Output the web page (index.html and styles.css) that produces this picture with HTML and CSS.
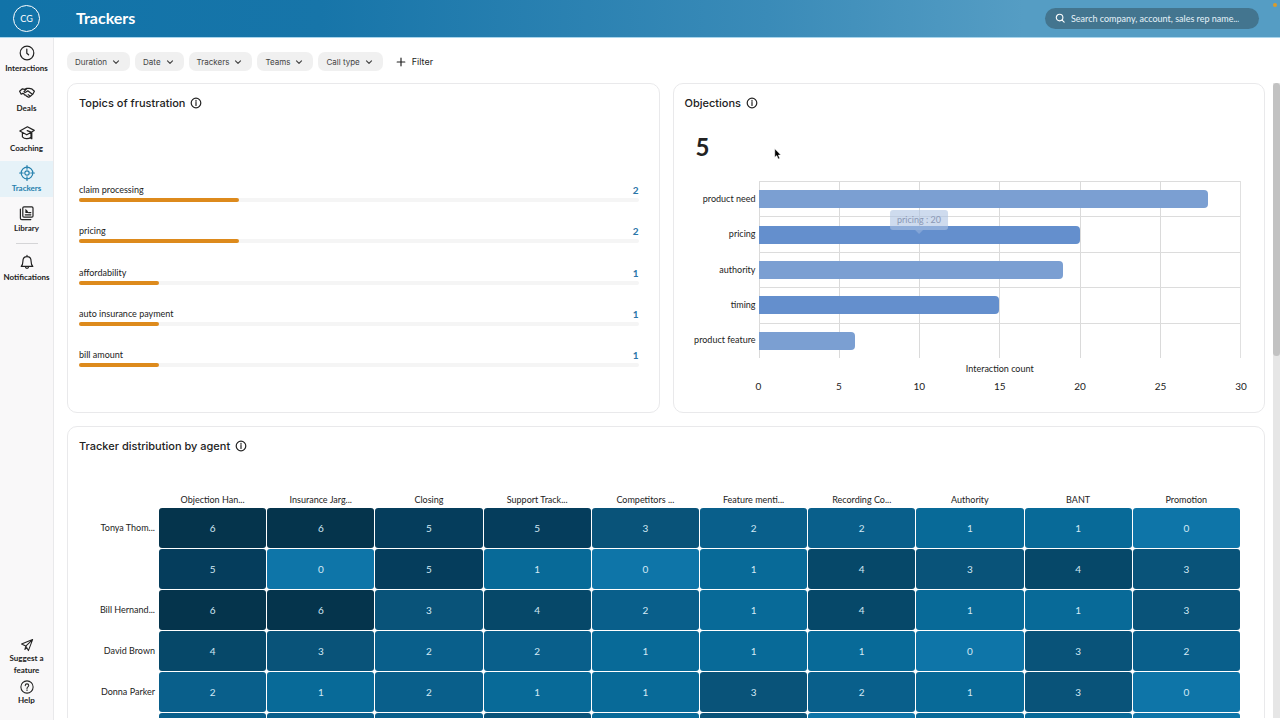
FILE: index.html
```html
<!DOCTYPE html>
<html lang="en">
  <head>
    <meta charset="UTF-8" />
    <meta name="viewport" content="width=device-width, initial-scale=1.0" />
    <title>Trackers</title>
    <link rel="stylesheet" href="styles.css">
  </head>
  <body>
    <header class="topbar">
      <button class="avatar" type="button">CG</button>
      <h1>Trackers</h1>
      <label class="search">
        <svg viewBox="0 0 12 12" width="11" height="11" class="icon"><circle cx="5" cy="5" r="3.6" /><path d="M7.7 7.7 10 10" /></svg>
        <input type="search" placeholder="Search company, account, sales rep name..." aria-label="Search" />
      </label>
      <span class="status-dot"></span>
    </header>

    <div class="layout">
      <nav class="sidebar">
        <a class="nav-item" href="#">
          <svg viewBox="0 0 16 16" width="16" height="16" class="icon"><circle cx="8" cy="8" r="6.8" /><path d="M7.8 4v4.2l1.8 1.6" /></svg>
          <span>Interactions</span>
        </a>
        <a class="nav-item" href="#">
          <svg viewBox="0 0 16 16" width="16" height="16" class="icon"><path d="M3.4 3.8.6 6.2l1.6 3M12.6 3.8l2.8 2.4-1.6 3M3.4 3.8l2.2.6 2.2-1 2.4 0 2.4.4M7.8 3.6 5 6.6c.6 1 2 .9 2.8-.2l1-.6 4.8 3.6M2.2 9.2l1.2-.8 1.4.2.6 1.2 1.4.3.5 1 1.2.2.6.8 1.2 0M13.6 9.4l-1.2 1-1 .9-1.2.8M9.2 9.6l2 1.6" /></svg>
          <span>Deals</span>
        </a>
        <a class="nav-item" href="#">
          <svg viewBox="0 0 16 16" width="16" height="16" class="icon"><path d="M.8 6 8.4 1.8 15.2 5.4 7.8 9.8ZM3.4 7.6v4.2c2 2.2 5.8 2.6 8.6.4V7.4M8.2 5.6l4.6 1.8v6.4l-1.4-1.2" /></svg>
          <span>Coaching</span>
        </a>
        <a class="nav-item active" href="#">
          <svg viewBox="0 0 16 16" width="16" height="16" class="icon"><circle cx="8" cy="8" r="5.8" /><circle cx="8" cy="8" r="2.2" /><path d="M8 .6v3.6M8 11.8v3.6M.6 8h3.6M11.8 8h3.6" /></svg>
          <span>Trackers</span>
        </a>
        <a class="nav-item" href="#">
          <svg viewBox="0 0 16 16" width="16" height="16" class="icon"><rect x="3.8" y="1.8" width="10.2" height="10.4" rx="1.2" /><path d="M1.4 4.2v9c0 .9.5 1.4 1.4 1.4h9M6.2 9.8h5.6M9.6 7.6h2.2" /><path class="solid" d="M6.4 3.8v4.2h3.4L8.2 5.6Z" /></svg>
          <span>Library</span>
        </a>
        <hr />
        <a class="nav-item" href="#">
          <svg viewBox="0 0 16 16" width="16" height="16" class="icon"><path d="M8 1.4v1M2.2 12.4h11.6c-1.4-1.4-1.7-2.4-1.7-5.2C12.1 4.4 10.4 2.6 8 2.6S3.9 4.4 3.9 7.2c0 2.8-.3 3.8-1.7 5.2ZM6.4 12.6c0 2.4 3.2 2.4 3.2 0" /></svg>
          <span>Notifications</span>
        </a>

        <div class="nav-footer">
          <a class="nav-item" href="#">
            <svg viewBox="0 0 16 16" width="14" height="14" class="icon"><path d="M14.4 1.8 1.8 6.8 6.6 9.2 9.6 14.4ZM14.4 1.8 6.6 9.2 5.6 13 7.8 11.4" /></svg>
            <span>Suggest a feature</span>
          </a>
          <a class="nav-item" href="#">
            <svg viewBox="0 0 16 16" width="14" height="14" class="icon"><circle cx="8" cy="8" r="7" /><path d="M6 6.4c0-2.6 4-2.6 4 0 0 1.5-2 1.5-2 3.2M8 11.2v.8" /></svg>
            <span>Help</span>
          </a>
        </div>
      </nav>

      <main class="content">
        <div class="filters">
          <button class="pill" type="button">Duration <svg viewBox="0 0 8 8" width="8" height="8" class="icon"><path d="M1.5 2.8 4 5.3l2.5-2.5" /></svg></button>
          <button class="pill" type="button">Date <svg viewBox="0 0 8 8" width="8" height="8" class="icon"><path d="M1.5 2.8 4 5.3l2.5-2.5" /></svg></button>
          <button class="pill" type="button">Trackers <svg viewBox="0 0 8 8" width="8" height="8" class="icon"><path d="M1.5 2.8 4 5.3l2.5-2.5" /></svg></button>
          <button class="pill" type="button">Teams <svg viewBox="0 0 8 8" width="8" height="8" class="icon"><path d="M1.5 2.8 4 5.3l2.5-2.5" /></svg></button>
          <button class="pill" type="button">Call type <svg viewBox="0 0 8 8" width="8" height="8" class="icon"><path d="M1.5 2.8 4 5.3l2.5-2.5" /></svg></button>
          <button class="add-filter" type="button"><svg viewBox="0 0 10 10" width="10" height="10" class="icon"><path d="M5 1.2v7.6M1.2 5h7.6" /></svg> Filter</button>
        </div>

        <div class="scroll-row">
          <div class="cards">
            <section class="card">
              <h2>Topics of frustration <svg viewBox="0 0 12 12" width="12" height="12" class="icon"><circle cx="6" cy="6" r="4.8" /><path d="M6 5.4v3M6 3.4v.8" /></svg></h2>
              <ul class="topics">
                <li><span>claim processing</span><b>2</b><div class="track"><div class="fill" style="width: 28.57%"></div></div></li>
                <li><span>pricing</span><b>2</b><div class="track"><div class="fill" style="width: 28.57%"></div></div></li>
                <li><span>affordability</span><b>1</b><div class="track"><div class="fill" style="width: 14.28%"></div></div></li>
                <li><span>auto insurance payment</span><b>1</b><div class="track"><div class="fill" style="width: 14.28%"></div></div></li>
                <li><span>bill amount</span><b>1</b><div class="track"><div class="fill" style="width: 14.28%"></div></div></li>
              </ul>
            </section>

            <section class="card objections">
              <h2>Objections <svg viewBox="0 0 12 12" width="12" height="12" class="icon"><circle cx="6" cy="6" r="4.8" /><path d="M6 5.4v3M6 3.4v.8" /></svg></h2>
              <div class="total">5</div>
              <div class="chart">
                <div class="y-labels">
                  <span>product need</span>
                  <span>pricing</span>
                  <span>authority</span>
                  <span>timing</span>
                  <span>product feature</span>
                </div>
                <div class="plot">
                  <div class="row"><div class="bar" style="width: 93.33%"></div></div>
                  <div class="row"><div class="bar dark" style="width: 66.67%"></div></div>
                  <div class="row"><div class="bar" style="width: 63.33%"></div></div>
                  <div class="row"><div class="bar dark" style="width: 50%"></div></div>
                  <div class="row"><div class="bar" style="width: 20%"></div></div>
                  <div class="tooltip">pricing : 20</div>
                </div>
                <div class="axis">
                  <div class="axis-title">Interaction count</div>
                  <div class="ticks"><span>0</span><span>5</span><span>10</span><span>15</span><span>20</span><span>25</span><span>30</span></div>
                </div>
              </div>
              <svg viewBox="0 0 8 12" width="8" height="12" class="cursor"><path d="M.8.8v8.4l2-1.6 1.4 3.4 1.5-.7-1.4-3.2h2.5Z" /></svg>
            </section>

            <section class="card wide">
              <h2>Tracker distribution by agent <svg viewBox="0 0 12 12" width="12" height="12" class="icon"><circle cx="6" cy="6" r="4.8" /><path d="M6 5.4v3M6 3.4v.8" /></svg></h2>
              <table class="heatmap">
                <thead>
                  <tr><td></td><th>Objection Han...</th><th>Insurance Jarg...</th><th>Closing</th><th>Support Track...</th><th>Competitors ...</th><th>Feature menti...</th><th>Recording Co...</th><th>Authority</th><th>BANT</th><th>Promotion</th></tr>
                </thead>
                <tbody>
                  <tr><th>Tonya Thom...</th><td class="v6">6</td><td class="v6">6</td><td class="v5">5</td><td class="v5">5</td><td class="v3">3</td><td class="v2">2</td><td class="v2">2</td><td class="v1">1</td><td class="v1">1</td><td class="v0">0</td></tr>
                  <tr><th></th><td class="v5">5</td><td class="v0">0</td><td class="v5">5</td><td class="v1">1</td><td class="v0">0</td><td class="v1">1</td><td class="v4">4</td><td class="v3">3</td><td class="v4">4</td><td class="v3">3</td></tr>
                  <tr><th>Bill Hernand...</th><td class="v6">6</td><td class="v6">6</td><td class="v3">3</td><td class="v4">4</td><td class="v2">2</td><td class="v1">1</td><td class="v4">4</td><td class="v1">1</td><td class="v1">1</td><td class="v3">3</td></tr>
                  <tr><th>David Brown</th><td class="v4">4</td><td class="v3">3</td><td class="v2">2</td><td class="v2">2</td><td class="v1">1</td><td class="v1">1</td><td class="v1">1</td><td class="v0">0</td><td class="v3">3</td><td class="v2">2</td></tr>
                  <tr><th>Donna Parker</th><td class="v2">2</td><td class="v1">1</td><td class="v2">2</td><td class="v1">1</td><td class="v1">1</td><td class="v3">3</td><td class="v2">2</td><td class="v1">1</td><td class="v3">3</td><td class="v0">0</td></tr>
                  <tr><th></th><td class="v2"></td><td class="v2"></td><td class="v2"></td><td class="v3"></td><td class="v1"></td><td class="v3"></td><td class="v0"></td><td class="v1"></td><td class="v1"></td><td class="v0"></td></tr>
                </tbody>
              </table>
            </section>
          </div>
          <div class="scrollbar"><div class="thumb"></div></div>
        </div>
      </main>
    </div>
  </body>
</html>
```
FILE: styles.css
```css
:root {
  --text: #222;
  --border: #e9e9eb;
  --orange: #dd8a1c;
}

* {
  box-sizing: border-box;
  margin: 0;
  padding: 0;
}

body {
  display: flex;
  flex-direction: column;
  height: 100vh;
  overflow: hidden;
  font-family: Lato, sans-serif;
  font-size: 9px;
  line-height: 16px;
  color: var(--text);
  background: #fff;
}

button,
input {
  font: inherit;
  color: inherit;
  border: 0;
  background: none;
}

a {
  color: inherit;
  text-decoration: none;
}

.icon {
  flex: none;
  fill: none;
  stroke: currentColor;
  stroke-width: 1.2;
  stroke-linecap: round;
  stroke-linejoin: round;
}

.icon .solid {
  fill: currentColor;
  stroke: none;
}

/* top bar */
.topbar {
  position: relative;
  display: flex;
  align-items: center;
  flex: none;
  height: 38px;
  padding: 0 21px 0 13px;
  border-bottom: 1px solid #a9d5ec;
  color: #fff;
  background: linear-gradient(90deg, #1173a8 0%, #1775a9 25%, #3a8bb8 60%, #559dc4 80%, #559dc4 100%);
}

.avatar {
  width: 27px;
  height: 27px;
  border: 1px solid #fff;
  border-radius: 50%;
}

.topbar h1 {
  margin-left: 36px;
  padding-bottom: 2px;
  font-size: 16px;
  line-height: 20px;
}

.search {
  display: flex;
  align-items: center;
  gap: 5px;
  width: 214px;
  height: 21px;
  margin-left: auto;
  padding: 0 10px;
  border-radius: 11px;
  background: #43758f;
}

.search input {
  flex: 1;
  min-width: 0;
  outline: none;
}

.search input::placeholder {
  color: #e6f3fa;
}

.status-dot {
  position: absolute;
  top: 3px;
  right: 3px;
  width: 4px;
  height: 4px;
  border-radius: 50%;
  background: #d99b2b;
}

.layout {
  display: flex;
  flex: 1;
  min-height: 0;
}

/* sidebar */
.sidebar {
  display: flex;
  flex-direction: column;
  gap: 4px;
  flex: none;
  width: 54px;
  padding: 3px 0 12px;
  border-right: 1px solid var(--border);
  background: #f9f8f9;
}

.nav-item {
  display: flex;
  flex-direction: column;
  align-items: center;
  padding: 4px 0 2px;
  font-size: 8px;
  font-weight: 700;
  line-height: 14px;
  text-align: center;
}

.nav-item.active {
  color: #2580ad;
  background: #e6f2f8;
}

.sidebar hr {
  width: 22px;
  margin: 2px auto;
  border: 0;
  border-top: 1px solid #d5d5d7;
}

.nav-footer {
  margin-top: auto;
}

.nav-footer .nav-item {
  padding: 2px 6px;
  line-height: 12px;
}

/* filters */
.content {
  display: flex;
  flex-direction: column;
  flex: 1;
  min-width: 0;
  padding: 14px 0 2px 13px;
}

.filters {
  display: flex;
  gap: 5px;
  flex: none;
  margin-bottom: 12px;
  font-family: Inter, sans-serif;
  font-size: 8px;
}

.pill,
.add-filter {
  display: flex;
  align-items: center;
  height: 19px;
}

.pill {
  gap: 5px;
  padding: 0 10px 0 8px;
  border-radius: 7px;
  color: #444;
  background: #f0f0f0;
}

.add-filter {
  gap: 6px;
  padding: 0 8px;
  font-size: 9px;
}

/* cards */
.scroll-row {
  display: flex;
  flex: 1;
  gap: 8px;
  min-height: 0;
}

.cards {
  display: grid;
  grid-template-columns: 1fr 1fr;
  align-content: start;
  gap: 13px;
  flex: 1;
  overflow: hidden;
}

.scrollbar {
  flex: none;
  width: 7px;
  background: #e6e6e6;
}

.thumb {
  height: 43%;
  border-radius: 4px;
  background: #c2c2c2;
}

.card {
  position: relative;
  min-height: 330px;
  padding: 11px;
  border: 1px solid var(--border);
  border-radius: 10px;
}

.card.wide {
  grid-column: span 2;
  padding-right: 23px;
}

.card h2 {
  display: flex;
  align-items: center;
  gap: 5px;
  font-family: Inter, sans-serif;
  font-size: 11px;
  font-weight: 500;
}

.topics {
  display: flex;
  flex-direction: column;
  justify-content: space-between;
  height: 185px;
  margin: 71px 9px 0 0;
  list-style: none;
}

.topics li {
  display: grid;
  grid-template-columns: 1fr auto;
}

.topics b {
  font-size: 10px;
  color: #2a75a8;
}

.track {
  grid-column: span 2;
  height: 4px;
  border-radius: 2px;
  background: #f5f5f5;
}

.fill {
  height: 100%;
  border-radius: 2px;
  background: var(--orange);
}

/* objections chart */
.total {
  margin: 20px 0 18px 11px;
  font-size: 24px;
  font-weight: 700;
  line-height: 32px;
}

.chart {
  display: grid;
  grid-template-columns: 74px 1fr;
  margin-right: 12px;
}

.y-labels,
.plot {
  display: flex;
  flex-direction: column;
  height: 177px;
}

.y-labels span,
.row {
  display: flex;
  align-items: center;
  flex: 1;
}

.y-labels span {
  justify-content: flex-end;
  padding-right: 3px;
  white-space: nowrap;
}

.plot {
  position: relative;
  border-right: 1px solid #e0e0e0;
  background: repeating-linear-gradient(90deg, #dadada 0 1px, transparent 1px calc(100% / 6));
}

.row {
  border-top: 1px solid #dcdcdc;
}

.bar {
  height: 18px;
  border-radius: 0 4px 4px 0;
  background: #7b9fd2;
}

.bar.dark {
  background: #648fcd;
}

.tooltip {
  position: absolute;
  top: 29px;
  left: calc(100% / 3);
  padding: 2px 7px;
  border-radius: 3px;
  transform: translateX(-50%);
  white-space: nowrap;
  color: #8b98b5;
  background: rgba(174, 195, 227, 0.6);
}

.tooltip::after {
  content: "";
  position: absolute;
  top: 100%;
  left: 50%;
  margin-left: -4px;
  border: 4px solid transparent;
  border-top-color: rgba(174, 195, 227, 0.4);
}

.axis {
  grid-column: 2;
  padding-top: 3px;
}

.axis-title {
  text-align: center;
}

.ticks {
  display: flex;
  justify-content: space-between;
  margin: 1px -10px 0;
  font-size: 10px;
}

.ticks span {
  width: 20px;
  text-align: center;
}

.cursor {
  position: absolute;
  top: 64px;
  left: 100px;
  stroke: #fff;
  stroke-width: 0.5;
}

/* heatmap */
.heatmap {
  width: 100%;
  margin-top: 38px;
  border-spacing: 1px;
  table-layout: fixed;
}

.heatmap th {
  font-weight: 400;
}

.heatmap thead {
  line-height: 14px;
}

.heatmap thead td {
  width: 78px;
}

.heatmap tbody tr {
  height: 40px;
}

.heatmap tbody th {
  padding-right: 3px;
  text-align: right;
  white-space: nowrap;
}

.heatmap tbody td {
  border-radius: 3px;
  font-size: 10px;
  text-align: center;
  color: #d3e9f5;
}

.v0 { background: #0e75a8; }
.v1 { background: #086a98; }
.v2 { background: #095f8b; }
.v3 { background: #095379; }
.v4 { background: #064869; }
.v5 { background: #053d5c; }
.v6 { background: #05344c; }
```
